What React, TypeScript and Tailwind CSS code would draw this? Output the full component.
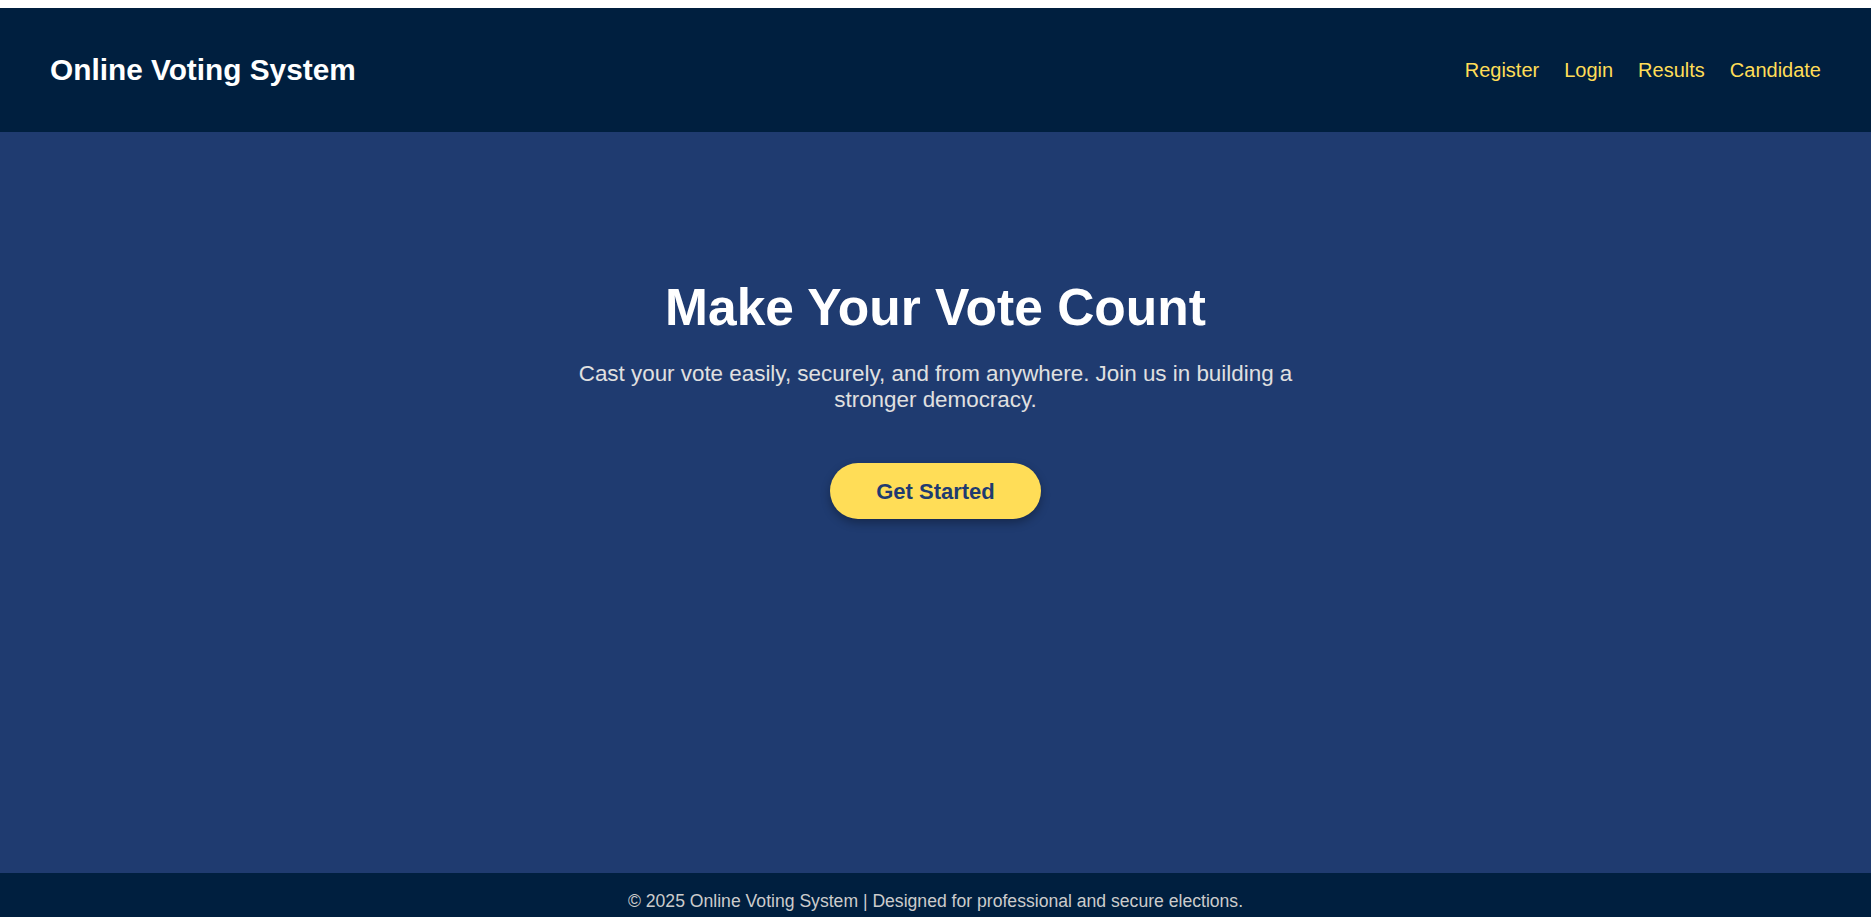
const navLinks = ["Register", "Login", "Results", "Candidate"];

export default function App() {
  return (
    <div className="bg-white pt-2 font-['Liberation_Sans',Arial,sans-serif]">
      <header className="flex h-[124px] items-center justify-between bg-[#001f3f] px-[50px]">
        <h1 className="text-[29.8px] font-bold leading-none text-white">Online Voting System</h1>
        <nav className="flex items-center gap-[25px]">
          {navLinks.map((link) => (
            <a key={link} href="#" className="text-[20px] text-[#ffdd57]">
              {link}
            </a>
          ))}
        </nav>
      </header>

      <main className="flex h-[741px] flex-col items-center bg-[#1f3b70] pt-[145px] text-center">
        <h2 className="text-[51.5px] font-bold leading-[normal] text-white">Make Your Vote Count</h2>
        <p className="mt-[24px] max-w-[800px] text-[22.4px] leading-[normal] text-[#e0e0e0]">
          Cast your vote easily, securely, and from anywhere. Join us in building a stronger democracy.
        </p>
        <button className="mt-[50px] h-[56px] rounded-full bg-[#ffdd57] px-[46px] text-[22px] font-bold text-[#1f3b70] shadow-[0_4px_10px_rgba(0,0,0,0.3)]">
          Get Started
        </button>
      </main>

      <footer className="h-[44px] bg-[#001f3f] pt-[18px] text-center text-[17.6px] leading-[normal] text-[#cccccc]">
        © 2025 Online Voting System | Designed for professional and secure elections.
      </footer>
    </div>
  );
}
